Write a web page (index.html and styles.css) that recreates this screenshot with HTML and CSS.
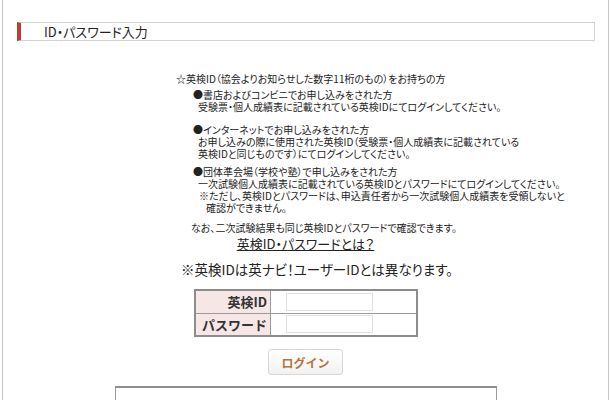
FILE: index.html
```html
<!DOCTYPE html>
<html lang="ja">
<head>
<meta charset="utf-8"/>
<title>ID・パスワード入力</title>
<link rel="stylesheet" href="styles.css">
</head>
<body>
<div class="frame">

  <!-- 見出し -------------------------------------------------------------->
  <h2 class="title">ID・パスワード入力</h2>

  <!-- 説明 ---------------------------------------------------------------->
  <div class="guide">
    <p class="lead">☆英検ID（協会よりお知らせした数字11桁のもの）をお持ちの方</p>

    <div class="case">
      <p class="case-head">●書店およびコンビニでお申し込みをされた方</p>
      <p class="case-body">受験票・個人成績表に記載されている英検IDにてログインしてください。</p>
    </div>

    <div class="case">
      <p class="case-head">●インターネットでお申し込みをされた方</p>
      <p class="case-body">お申し込みの際に使用された英検ID（受験票・個人成績表に記載されている<br>英検IDと同じものです）にてログインしてください。</p>
    </div>

    <div class="case case-group">
      <p class="case-head">●団体準会場（学校や塾）で申し込みをされた方</p>
      <p class="case-body">一次試験個人成績表に記載されている英検IDとパスワードにてログインしてください。</p>
      <p class="case-note">※ただし、英検IDとパスワードは、申込責任者から一次試験個人成績表を受領しないと<br><span class="indent">確認ができません。</span></p>
    </div>

    <p class="note">なお、二次試験結果も同じ英検IDとパスワードで確認できます。</p>
  </div>

  <p class="help"><a href="#">英検ID・パスワードとは？</a></p>
  <p class="caution">※英検IDは英ナビ！ユーザーIDとは異なります。</p>

  <!-- 入力 ---------------------------------------------------------------->
  <table class="login-table">
    <tr>
      <th>英検ID</th>
      <td><input type="text"></td>
    </tr>
    <tr>
      <th>パスワード</th>
      <td><input type="password"></td>
    </tr>
  </table>

  <div class="actions">
    <button class="btn-login">ログイン</button>
  </div>

  <div class="next-box"></div>

</div>
</body>
</html>
```

FILE: styles.css
```css
*{margin:0;padding:0;box-sizing:border-box}
body{
  background:#fff;
  font-family:"Noto Sans CJK JP","Noto Sans",sans-serif;
  color:#222;
  font-size:10px;
  overflow:hidden;
}
.frame{
  margin:0 1px 0 2px;
  height:400px;
  overflow:hidden;
  border-left:1px solid #c8c8c8;
  border-right:1px solid #c8c8c8;
  padding-top:22px;
}
.title{
  margin:0 13px 0 14px;
  height:19px;
  border:1px solid #d2d2d2;
  border-left:4px solid #b8402e;
  padding-left:23px;
  font-size:13px;
  font-weight:normal;
  line-height:17px;
  font-feature-settings:"palt";
}
.guide{
  margin:32px 0 0 173px;
  line-height:12px;
  font-feature-settings:"palt";
}
.case{margin-top:4px;padding-left:17px}
.case + .case{margin-top:11px}
.case-group{margin-top:6px !important}
.case-body{padding-left:5px}
.case-note{padding-left:6px}
.indent{padding-left:7px}
.note{margin-top:8px;padding-left:15px}
.help{
  margin-top:2px;
  text-align:center;
  font-size:13px;
  line-height:16px;
  font-feature-settings:"palt";
}
.help a{color:#222;text-decoration:underline}
.caution{
  margin-top:9px;
  padding-left:178px;
  font-size:13.5px;
  line-height:16px;
  font-feature-settings:"palt";
}
.login-table{
  margin:12px auto 0;
  width:224px;
  border-collapse:collapse;
  border:2px solid #8c8c8c;
}
.login-table th,
.login-table td{
  border:1px solid #9a9a9a;
  height:23px;
  padding:0;
}
.login-table th{
  width:76px;
  background:#f6e6e6;
  text-align:right;
  font-size:13px;
  font-weight:bold;
  padding-right:3px;
  color:#333;
}
.login-table td{padding-left:15px}
.login-table input{
  display:block;
  width:87px;
  height:18px;
  border:1px solid #e0e0e0;
}
.actions{
  margin-top:12px;
  text-align:center;
}
.btn-login{
  width:75px;
  height:26px;
  border:1px solid #d8d8d8;
  border-radius:3px;
  background:linear-gradient(#fff,#f2f2f2);
  color:#c0703a;
  font-family:inherit;
  font-size:12px;
  font-weight:bold;
}
.next-box{
  margin:11px auto 0;
  width:382px;
  height:40px;
  border:1px solid #999;
  border-top:2px solid #8e8e8e;
}
```
